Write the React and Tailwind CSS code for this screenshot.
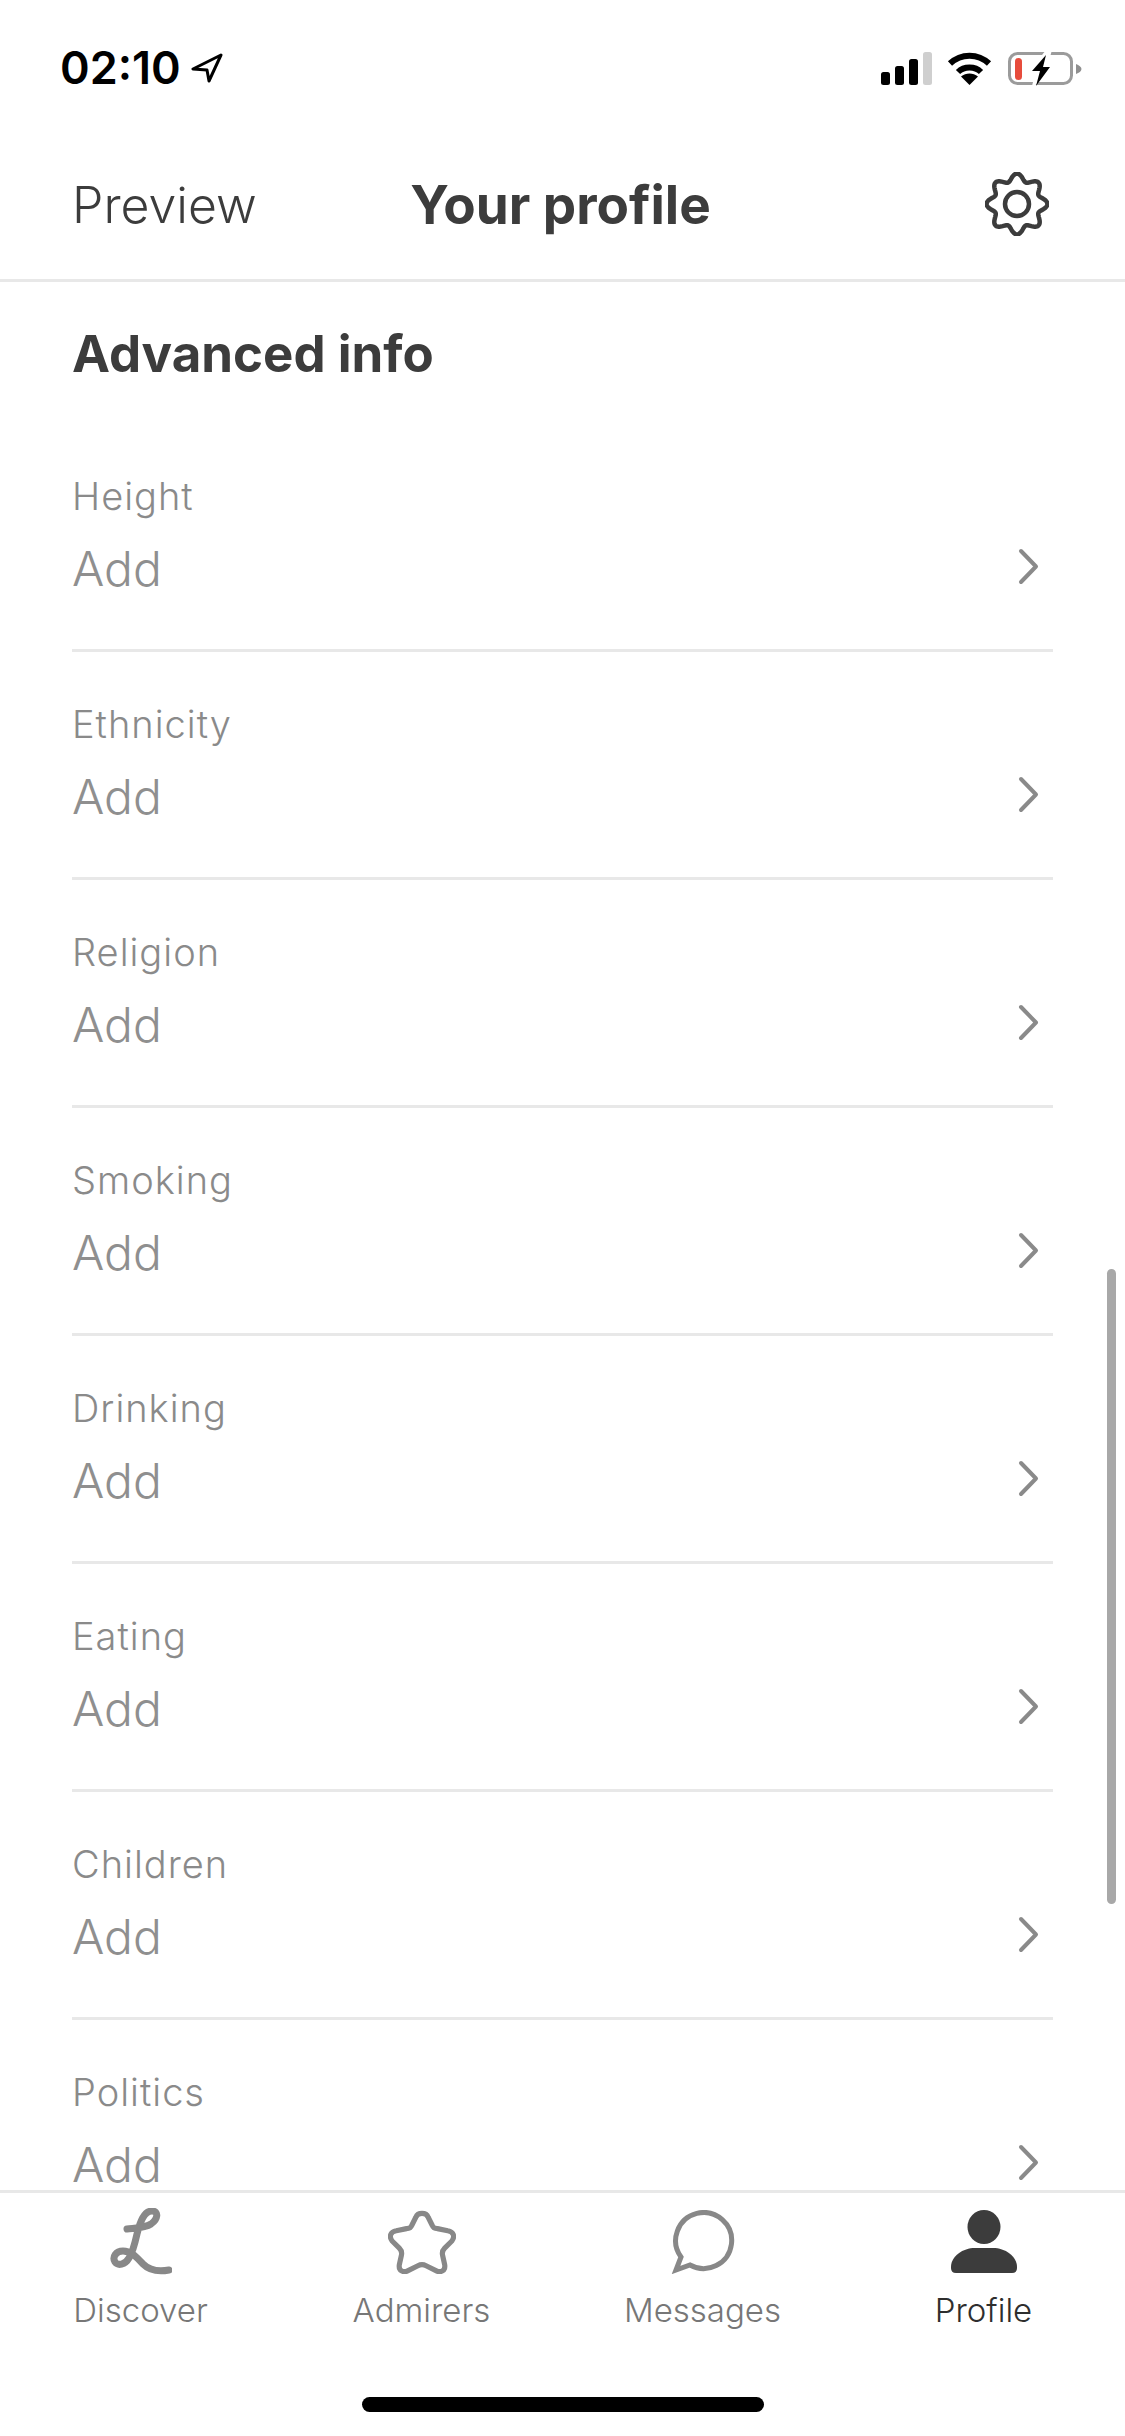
import React from 'react'

const fields = ['Height', 'Ethnicity', 'Religion', 'Smoking', 'Drinking', 'Eating', 'Children', 'Politics']

// 8 lobed outline for the settings gear
const gearPath = () => {
  const pts = []
  for (let i = 0; i < 240; i++) {
    const a = (i / 240) * Math.PI * 2
    const r = 26.8 + 3.6 * Math.cos(8 * a)
    pts.push(`${(32 + r * Math.sin(a)).toFixed(2)} ${(32 - r * Math.cos(a)).toFixed(2)}`)
  }
  return `M${pts.join('L')}Z`
}

const StatusIcons = () => (
  <div className="flex items-end gap-[15px]">
    <svg width="51" height="33" viewBox="0 0 51 33">
      <rect x="0" y="20" width="9" height="13" rx="2.5" fill="#000" />
      <rect x="14" y="14" width="9" height="19" rx="2.5" fill="#000" />
      <rect x="28" y="7" width="9" height="26" rx="2.5" fill="#000" />
      <rect x="42" y="0" width="9" height="33" rx="2.5" fill="#cfcfcf" />
    </svg>
    <svg width="45" height="33" viewBox="0 0 45 33">
      <path d="M3 11.5 C14 1 31 1 42 11.5" fill="none" stroke="#000" strokeWidth="6" />
      <path d="M11 20 C17 14 28 14 34 20" fill="none" stroke="#000" strokeWidth="6" />
      <path d="M22.5 33 L14 24.5 C19 20.5 26 20.5 31 24.5 Z" fill="#000" />
    </svg>
    <svg width="74" height="36" viewBox="0 0 74 36" className="ml-[1px] -mb-[3px]">
      <rect x="1.5" y="1.5" width="62" height="30" rx="8" fill="none" stroke="#9b9b9b" strokeWidth="3" />
      <path d="M68 12 C71 13 73.5 15 73.5 17 C73.5 19 71 21 68 22 Z" fill="#8f8f8f" />
      <rect x="7" y="6" width="7" height="22" rx="3.5" fill="#e74c3c" />
      <path d="M38 -2 L19 22 L27 22 L23 38 L47 12 L40 12 L44 -2 Z" fill="#fff" />
      <path d="M38 3 L24 19 L32 19 L28 34 L42 15 L35 15 Z" fill="#000" />
    </svg>
  </div>
)

const Chevron = () => (
  <svg width="22" height="37" viewBox="0 0 22 37" fill="none" stroke="#8a8a8a" strokeWidth="4" strokeLinecap="round" strokeLinejoin="round">
    <path d="M3 3 L18 18.5 L3 34" />
  </svg>
)

const Row = ({ label }) => (
  <div className="mx-[72px] flex h-[228px] shrink-0 items-start justify-between border-b-[3px] border-[#e8e8e8] pt-[50px]">
    <div>
      <div className="text-[38px] leading-[44px] font-light tracking-[1px] text-[#8a8a8a]">{label}</div>
      <div className="mt-[23px] text-[48px] leading-[56px] font-light text-[#8f8f8f]">Add</div>
    </div>
    <div className="mt-[74px] mr-[13px]">
      <Chevron />
    </div>
  </div>
)

const Tab = ({ label, active, children }) => (
  <div className="flex w-[281px] flex-col items-center">
    <div className="flex h-[68px] items-center justify-center">{children}</div>
    <div className={`mt-[12px] text-[33px] leading-[44px] font-light ${active ? 'text-[#2e2e2e]' : 'text-[#777777]'}`}>{label}</div>
  </div>
)

export default function App() {
  return (
    <div className="relative flex h-[2436px] w-[1125px] flex-col overflow-hidden bg-white font-[Inter,sans-serif]">
      {/* Status bar */}
      <div className="flex h-[105px] shrink-0 items-start justify-between pt-[42px] pr-[43px] pl-[60px]">
        <div className="flex items-center gap-[10px]">
          <span className="text-[45px] leading-[52px] font-semibold text-black">02:10</span>
          <svg width="32" height="30" viewBox="0 0 32 30" fill="none" stroke="#000" strokeWidth="3" strokeLinejoin="round">
            <path d="M30 2 L2 16 L16 17 L18 28 Z" />
          </svg>
        </div>
        <div className="pt-[10px]">
          <StatusIcons />
        </div>
      </div>

      {/* Header */}
      <div className="flex h-[177px] shrink-0 items-center justify-between border-b-[3px] border-[#e8e8e8] pt-[26px] pr-[76px] pl-[72px]">
        <div className="w-[300px] text-[50px] leading-[60px] font-light text-[#3c3c3c]">Preview</div>
        <div className="text-[53px] leading-[60px] font-bold text-[#3c3c3c]">Your profile</div>
        <div className="-mt-[2px] flex w-[300px] justify-end">
          <svg width="64" height="64" viewBox="0 0 64 64" fill="none" stroke="#3c3c3c" strokeWidth="4.5">
            <path d={gearPath()} />
            <circle cx="32" cy="32" r="12" />
          </svg>
        </div>
      </div>

      {/* Advanced info list */}
      <div className="flex min-h-0 flex-1 flex-col overflow-hidden">
        <div className="h-[142px] shrink-0 px-[72px] pt-[42px] text-[51px] leading-[60px] font-bold text-[#3c3c3c]">Advanced info</div>
        {fields.map((f) => (
          <Row key={f} label={f} />
        ))}
      </div>

      {/* Tab bar */}
      <div className="flex h-[246px] shrink-0 flex-col border-t-[3px] border-[#e8e8e8] pt-[15px]">
        <div className="flex">
          <Tab label="Discover">
            <svg width="62" height="68" viewBox="0 0 62 68" fill="none" stroke="#888888" strokeWidth="7" strokeLinecap="round">
              <path d="M17 21 C25 20 35 20 41 16 C48 11 49 3 42 3 C34 3 30 14 27 26 C25 35 23 44 19 50 C15 57 8 58 5 54 C2 49 6 43 13 43 C22 43 27 50 33 56 C40 63 48 64 59 62" />
            </svg>
          </Tab>
          <Tab label="Admirers">
            <svg width="68" height="64" viewBox="0 0 66 62" fill="none" stroke="#888888" strokeWidth="5" strokeLinejoin="round">
              <path d="M27 7 C29 2 37 2 39 7 L43 15 Q44 18 48 18 L58 20 C64 21 65 26 62 30 L55 37 Q52 40 53 44 L55 53 C56 59 51 61 47 59 L37 54 Q33 52 29 54 L19 59 C15 61 10 59 11 53 L13 44 Q14 40 11 37 L4 30 C1 26 2 21 8 20 L18 18 Q22 18 23 15 Z" />
            </svg>
          </Tab>
          <Tab label="Messages">
            <svg width="64" height="64" viewBox="0 0 64 64" fill="none" stroke="#888888" strokeWidth="5">
              <path d="M19 55 A28 28 0 1 0 10 47 L5 60 Z" />
            </svg>
          </Tab>
          <Tab label="Profile" active>
            <svg width="66" height="64" viewBox="0 0 66 64" fill="#3c3c3c">
              <ellipse cx="33" cy="17" rx="16.5" ry="17" />
              <path d="M0 57 C0 46 12 38 24 38 H42 C54 38 66 46 66 57 V58 Q66 63 61 63 H5 Q0 63 0 58 Z" />
            </svg>
          </Tab>
        </div>
      </div>

      {/* Scroll indicator */}
      <div className="absolute top-[1269px] left-[1107px] h-[635px] w-[9px] rounded-full bg-[#a8a8a8]" />
      {/* Home indicator */}
      <div className="absolute top-[2397px] left-[362px] h-[15px] w-[402px] rounded-full bg-black" />
    </div>
  )
}
